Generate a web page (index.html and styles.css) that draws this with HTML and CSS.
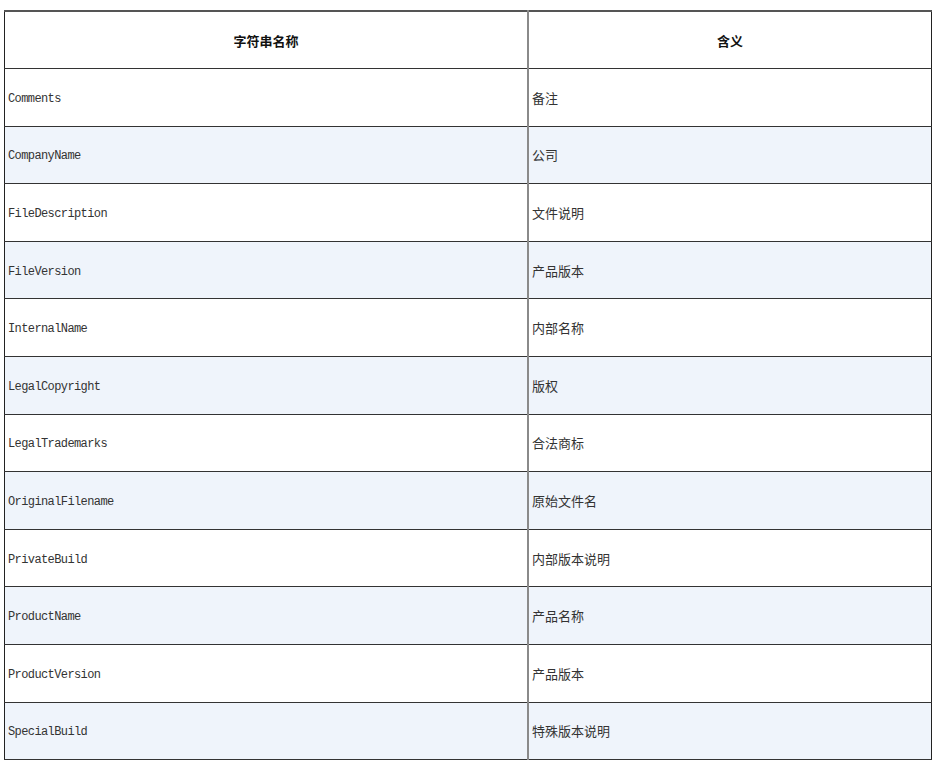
FILE: index.html
```html
<!DOCTYPE html>
<html lang="zh">
<head>
<meta charset="utf-8">
<title>字符串名称</title>
<link rel="stylesheet" href="styles.css">
</head>
<body>
<table class="info">
  <thead>
    <tr><th class="c1">字符串名称</th><th class="c2">含义</th></tr>
  </thead>
  <tbody>
    <tr><td class="name">Comments</td><td class="desc">备注</td></tr>
    <tr class="alt"><td class="name">CompanyName</td><td class="desc">公司</td></tr>
    <tr><td class="name">FileDescription</td><td class="desc">文件说明</td></tr>
    <tr class="alt"><td class="name">FileVersion</td><td class="desc">产品版本</td></tr>
    <tr><td class="name">InternalName</td><td class="desc">内部名称</td></tr>
    <tr class="alt"><td class="name">LegalCopyright</td><td class="desc">版权</td></tr>
    <tr><td class="name">LegalTrademarks</td><td class="desc">合法商标</td></tr>
    <tr class="alt"><td class="name">OriginalFilename</td><td class="desc">原始文件名</td></tr>
    <tr><td class="name">PrivateBuild</td><td class="desc">内部版本说明</td></tr>
    <tr class="alt"><td class="name">ProductName</td><td class="desc">产品名称</td></tr>
    <tr><td class="name">ProductVersion</td><td class="desc">产品版本</td></tr>
    <tr class="alt"><td class="name">SpecialBuild</td><td class="desc">特殊版本说明</td></tr>
  </tbody>
</table>
</body>
</html>
```
FILE: styles.css
```css
html, body {
  margin: 0;
  padding: 0;
  background: #ffffff;
}
body {
  padding: 10px 0 0 4px;
  font-family: "Noto Sans CJK SC", "Noto Sans", sans-serif;
  color: #222;
}
.info {
  border-collapse: collapse;
  width: 928px;
  table-layout: fixed;
  border: 1px solid #222;
  border-top: 2px solid #555;
}
.info th, .info td {
  border-top: 1px solid #333;
  border-bottom: 1px solid #333;
  padding: 0 3px;
  vertical-align: middle;
  text-align: left;
}
.info th {
  height: 56px;
  font-size: 13px;
  font-weight: bold;
  text-align: center;
  color: #111;
}
.info td {
  height: 56.6px;
}
.info .c1 { width: 516px; }
.info th:first-child, .info td:first-child {
  border-right: 2px solid #8a8a8a;
}
.info tr.alt td {
  background: #eff4fb;
}
.info td.name {
  font-family: "Liberation Mono", "DejaVu Sans Mono", monospace;
  font-size: 12px;
  letter-spacing: -0.6px;
  color: #333;
  padding-top: 3px;
  height: 53.6px;
}
.desc {
  font-family: "Noto Sans CJK SC", sans-serif;
  font-size: 13px;
  color: #333;
}
```
